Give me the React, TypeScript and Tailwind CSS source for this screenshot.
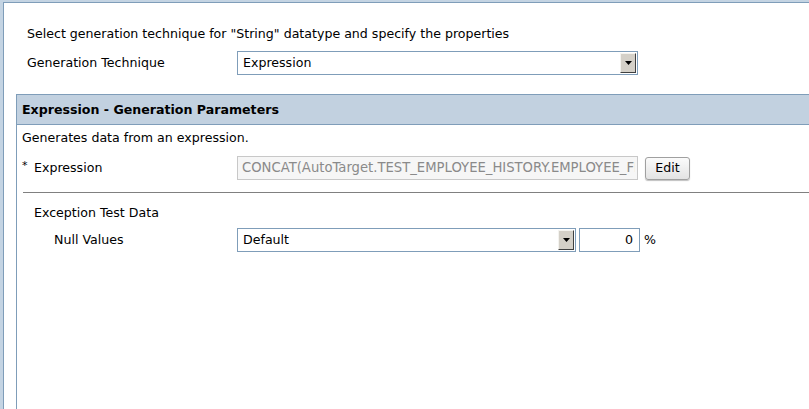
import React from "react";

const font = { fontFamily: '"DejaVu Sans", Verdana, sans-serif' };

function DropBtn() {
  return (
    <div className="h-full w-[18px] p-px">
      <div className="h-full w-full bg-[#d4d0c8] border-t border-l border-t-[#f4f3ef] border-l-[#f4f3ef] border-b border-r border-b-[#404040] border-r-[#404040] flex items-center justify-center">
        <svg width="7" height="4" viewBox="0 0 7 4">
          <path d="M0 0 H7 L3.5 4 Z" fill="#000" />
        </svg>
      </div>
    </div>
  );
}

function Select({ value, width }: { value: string; width: string }) {
  return (
    <div className={`${width} h-[24px] border border-[#7f9db9] bg-white flex items-center`}>
      <div className="flex-1 pl-[5px] text-black leading-[16px]">{value}</div>
      <DropBtn />
    </div>
  );
}

export default function App() {
  return (
    <div
      className="w-[809px] h-[409px] bg-[#c4d4e3] pl-[3px] pt-[2px] overflow-hidden text-[12.6px] text-black leading-[16px]"
      style={font}
    >
      <div className="h-full bg-white border-l border-t border-[#7f9db9] flex flex-col">
        <div className="pl-[23px] pt-[23px]">
          <div className="h-[16px]">Select generation technique for "String" datatype and specify the properties</div>
          <div className="mt-[9px] flex items-center">
            <div className="w-[210px]">Generation Technique</div>
            <Select value="Expression" width="w-[401px]" />
          </div>
        </div>
        <div className="ml-[12px] mt-[19px] flex-1 border-l border-[#7f9db9] flex flex-col">
          <div className="h-[31px] bg-[#c2d1e0] border-t border-b border-[#7f9db9] pl-[5px] flex items-center font-bold">
            Expression - Generation Parameters
          </div>
          <div className="pl-[5px] pt-[5px]">
            <div className="h-[16px]">Generates data from an expression.</div>
            <div className="mt-[10px] flex items-center">
              <div className="w-[215px] flex items-center">
                <span className="text-[11px] leading-[11px] self-start w-[12px]">*</span>
                <span>Expression</span>
              </div>
              <div className="w-[401px] h-[24px] border border-[#c8c8c8] bg-[#f6f6f6] overflow-hidden pl-[4px] pr-[2px] flex items-center text-[#8a8a8a] text-[13.2px]">
                <span className="block overflow-hidden whitespace-nowrap">CONCAT(AutoTarget.TEST_EMPLOYEE_HISTORY.EMPLOYEE_FI</span>
              </div>
              <button className="ml-[7px] w-[45px] h-[23px] rounded-[3px] border border-[#a0a0a0] bg-gradient-to-b from-[#fbfbfb] to-[#e3e3e3] shadow-[0_1px_1px_rgba(0,0,0,0.25)] text-black">
                Edit
              </button>
            </div>
            <div className="mt-[12px] ml-px border-t border-[#808080]" />
            <div className="mt-[12px] pl-[12px] h-[16px]">Exception Test Data</div>
            <div className="mt-[7px] flex items-center">
              <div className="w-[215px] pl-[32px]">Null Values</div>
              <Select value="Default" width="w-[339px]" />
              <div className="ml-[3px] w-[61px] h-[24px] border border-[#7f9db9] bg-white flex items-center justify-end pr-[6px]">0</div>
              <span className="ml-[4px]">%</span>
            </div>
          </div>
        </div>
      </div>
    </div>
  );
}
